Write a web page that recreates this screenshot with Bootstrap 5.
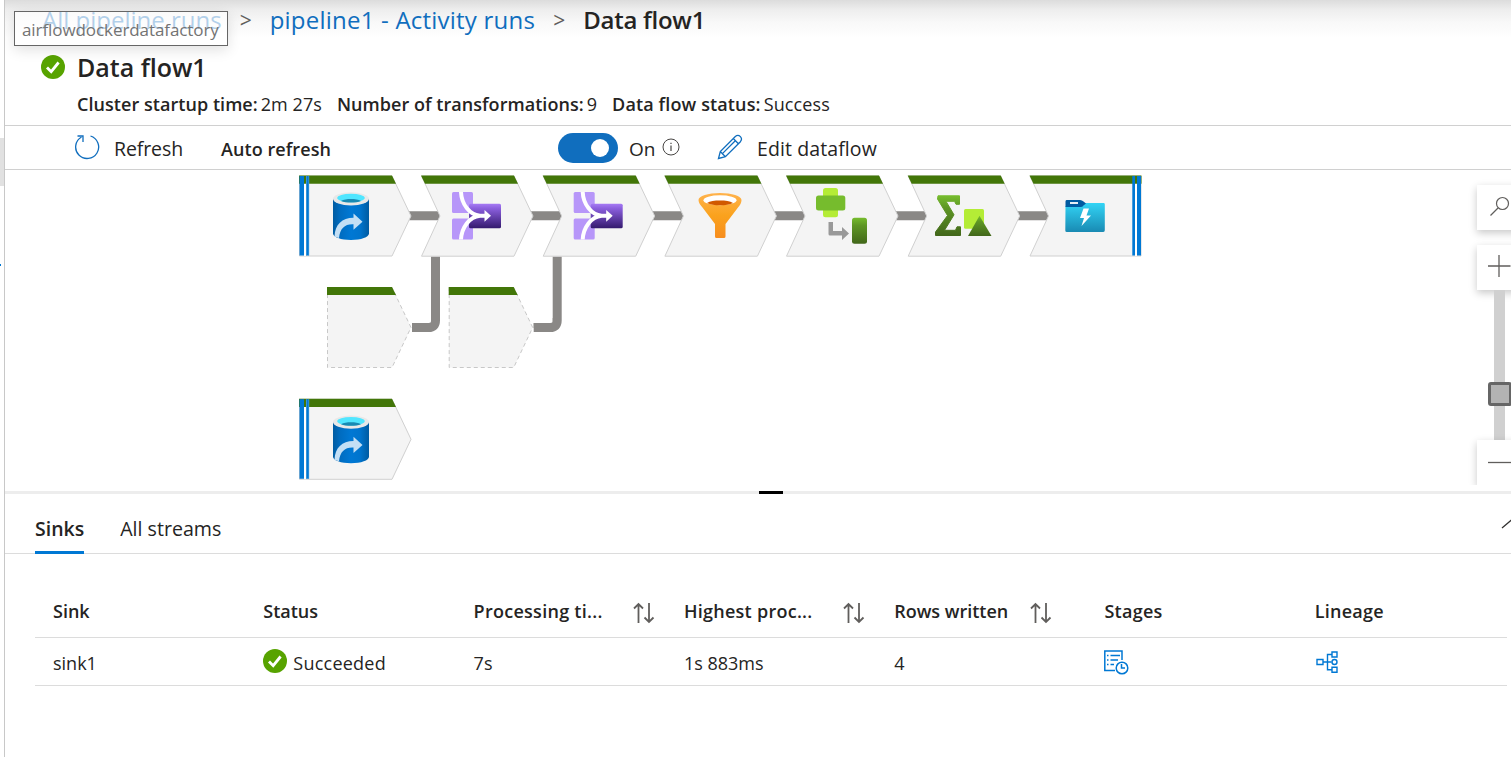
<!DOCTYPE html>
<html lang="en">
<head>
<meta charset="utf-8">
<title>Data flow1</title>
<meta name="viewport" content="width=device-width, initial-scale=1">
<link rel="stylesheet" href="https://cdn.jsdelivr.net/npm/bootstrap@5.3.0/dist/css/bootstrap.min.css">
<style>
  body { font-family: "Open Sans", "Noto Sans", sans-serif; color: #252423; background: #fff; font-size: 18px; line-height: 26px; height: 757px; }
  b, .semi { font-weight: 600; }
  svg { display: block; flex-shrink: 0; }
  .rail { width: 5px; border-right: 1px solid #c8c8c8; }
  .rail-thumb { position: absolute; top: 138px; left: 0; width: 4px; height: 48px; background: #e1e1e1; }
  .rail-dot { position: absolute; top: 264px; left: 0; width: 1px; height: 2px; background: #0078d4; }

  .head { height: 126px; border-bottom: 1px solid #d0d0d0; background: linear-gradient(#dcdcdc 0, #eee 10px, #f8f8f8 22px, #fff 38px); }
  .crumbs { height: 40px; padding-left: 37px; font-size: 24px; }
  .crumbs a { color: #106ebe; text-decoration: none; }
  .crumbs .activity { letter-spacing: .22px; }
  .crumbs .here { letter-spacing: -.25px; }
  .crumbs .sep { color: #605e5c; font-size: 21px; width: 48px; text-align: center; }
  .tip { position: absolute; left: 9px; top: 11px; width: 214px; height: 35px; padding-left: 7px; border: 1px solid #666; background: rgba(255,255,255,.68); color: #737373; box-shadow: 0 4px 14px rgba(0,0,0,.12); font-size: 17px; line-height: 36px; letter-spacing: -.08px; }
  .title { height: 54px; padding-left: 36px; gap: 12px; }
  .title h1 { font-size: 25px; font-weight: 600; line-height: 34px; }
  .facts { padding-left: 72px; height: 20px; gap: 15px; letter-spacing: .05px; }
  .facts b { margin-right: 3px; }
  .facts .status { letter-spacing: .13px; }

  .tools { height: 44px; border-bottom: 1px solid #d0d0d0; padding-left: 69px; }
  .cmd { font-size: 19.5px; padding-top: 3px; letter-spacing: .1px; }
  .cmd-refresh { margin-left: 14px; letter-spacing: -.1px; }
  .cmd-edit { margin-left: 14px; }
  .auto { width: 337px; margin-left: 38px; padding-top: 3px; letter-spacing: .07px; }
  .switch { width: 60px; height: 30px; border-radius: 15px; background: #106ebe; padding-right: 9px; }
  .knob { width: 18px; height: 18px; border-radius: 50%; background: #fff; }
  .state { margin-left: 11px; padding-top: 3px; font-size: 19px; width: 33px; }
  .pencil { margin-left: 37px; }
  .tools > svg { margin-top: -1px; }

  .canvas { height: 321px; }
  .zoomer { position: absolute; left: 1462px; top: 0; width: 44px; height: 315px; padding: 15px 0 0 10px; overflow: hidden; }
  .zbtn { width: 45px; height: 45px; background: #fff; box-shadow: 0 3px 8px rgba(0,0,0,.22); }
  .zbtn-in { margin-top: 15px; }
  .track { width: 11px; height: 150px; margin-left: 17px; background: #d0d0d0; }
  .thumb { position: absolute; left: 21px; top: 212px; width: 24px; height: 24px; border: 3px solid #666; border-radius: 3px; background: #b3b3b3; }

  .split { height: 3px; background: #ededed; }
  .grip { width: 24px; height: 3px; background: #000; margin-left: 754px; }
  .tabs { height: 60px; padding-left: 30px; border-bottom: 1px solid #dcdcdc; gap: 36px; font-size: 19.6px; }
  .tabs .tab { padding-top: 22px; height: 60px; }
  .tabs .on { border-bottom: 3px solid #0078d4; font-weight: 600; font-size: 19.5px; }
  .chev { position: absolute; left: 1495px; top: 517px; }
  .lines { margin: 31px 4px 0 30px; }
  .line { border-bottom: 1px solid #dcdcdc; padding-left: 18px; }
  .line > div { flex: 0 0 210.3px; }
  .line.top { height: 53px; padding-bottom: 1px; }
  .line.item { height: 48px; padding-top: 2px; }
  .cut { width: 159px; letter-spacing: .27px; }
  .wide { letter-spacing: .24px; }
  .sort { margin-top: 4px; }
  .sort-near { margin-left: 22px; }
  .ok { margin: -3px 6px 0 0; }
  .act { margin-top: -1px; }
</style>
</head>
<body class="d-flex overflow-hidden text-nowrap">
<aside class="rail flex-shrink-0 position-relative"><div class="rail-thumb"></div><div class="rail-dot"></div></aside>
<main class="flex-grow-1 position-relative overflow-hidden">
  <header class="head">
    <nav class="crumbs d-flex align-items-center">
      <a href="#">All pipeline runs</a><span class="sep">&gt;</span>
      <a href="#" class="activity">pipeline1 - Activity runs</a><span class="sep">&gt;</span>
      <span class="semi here">Data flow1</span>
    </nav>
    <div class="tip">airflowdockerdatafactory</div>
    <div class="title d-flex align-items-center">
      <svg width="24" height="24" viewBox="0 0 24 24"><circle cx="12" cy="12" r="12" fill="#57a300"/><path d="M6 12.400l4.200 4.300L17.600 7.500" fill="none" stroke="#fff" stroke-width="2.800"/></svg>
      <h1 class="m-0">Data flow1</h1>
    </div>
    <div class="facts d-flex align-items-center">
      <div><b>Cluster startup time:</b>2m 27s</div>
      <div><b>Number of transformations:</b>9</div>
      <div class="status"><b>Data flow status:</b>Success</div>
    </div>
  </header>

  <div class="tools d-flex align-items-center">
    <svg width="26" height="26" viewBox="0 0 26 26" fill="none" stroke="#106ebe" stroke-width="1.300"><path d="M16.500 2A11.500 11.500 0 1 1 7.500 3"/><path d="M3.500 2H9v6"/></svg>
    <span class="cmd cmd-refresh">Refresh</span>
    <b class="auto">Auto refresh</b>
    <div class="switch d-flex align-items-center justify-content-end"><div class="knob"></div></div>
    <span class="state">On</span>
    <svg width="18" height="18" viewBox="0 0 18 18" fill="none" stroke="#484644"><circle cx="9" cy="9" r="8"/><path d="M9 7.500v5.500M9 4.700v1.400" stroke-width="1.200"/></svg>
    <svg class="pencil" width="26" height="26" viewBox="0 0 26 26" fill="none" stroke="#106ebe" stroke-width="1.300"><path d="M1.500 24.500L3.300 17.500 18.300 2.500Q21 .3 23.400 2.600 25.600 5 23.400 7.700L8.400 22.700zM3.300 17.500l5.100 5.200M16.300 4.500l5.100 5.200M5.400 19.600L18.800 6.200"/></svg>
    <span class="cmd cmd-edit">Edit dataflow</span>
  </div>

  <section class="canvas position-relative">
    <svg width="1506" height="321" viewBox="5 170 1506 321">
      <defs>
        <linearGradient id="blue"><stop offset="0" stop-color="#005ba1"/><stop offset=".2" stop-color="#006cc0"/><stop offset=".5" stop-color="#0078d4"/><stop offset=".75" stop-color="#0074cd"/><stop offset="1" stop-color="#005ba1"/></linearGradient>
        <linearGradient id="violet" x2="0" y2="1"><stop offset="0" stop-color="#a67af4"/><stop offset=".2" stop-color="#8a5edc"/><stop offset="1" stop-color="#341a6e"/></linearGradient>
        <linearGradient id="orange" x2="0" y2="1"><stop offset="0" stop-color="#ffb34d"/><stop offset=".5" stop-color="#faa21d"/><stop offset="1" stop-color="#f78d1e"/></linearGradient>
        <linearGradient id="green" x2="0" y2="1"><stop offset="0" stop-color="#76bc2d"/><stop offset=".3" stop-color="#5e9624"/><stop offset="1" stop-color="#42671a"/></linearGradient>
        <linearGradient id="sky" x2="0" y2="1"><stop offset="0" stop-color="#32d4f5"/><stop offset="1" stop-color="#198ab3"/></linearGradient>
        <g id="source">
          <path d="M299.500 176H392l19 40-19 40H299.500z" fill="#f4f4f4" stroke="#d0d0d0"/>
          <path d="M299 175.500h93l4 8.300h-97z" fill="#427608"/>
          <path d="M304 184h2v72h-2z" fill="#fff"/>
          <path d="M299.500 176h4.500v79.500h-4.500zM306 176h3v79.500h-3z" fill="#0078d4"/>
          <path d="M306.500 176v79.500M308.800 176v79.500" stroke="#5ba6dc" stroke-width=".6"/>
          <path d="M333 199v34.500c0 3.600 8 6.500 18 6.500s18-2.900 18-6.500V199z" fill="url(#blue)"/>
          <ellipse cx="351" cy="198.800" rx="18" ry="6.600" fill="#e8e8e8"/>
          <ellipse cx="351" cy="198" rx="13.800" ry="4.200" fill="#50e6ff"/>
          <path d="M341 201c2.500-1.400 6-2 10-2s7.500.6 10 2c-2.500 1-6 1.500-10 1.500s-7.500-.5-10-1.500z" fill="#198ab3"/>
          <path d="M334.500 236.500c.5-12 7.500-18.800 19-18.800v-4.200l9 8.200-9 8v-5.500c-8.500-.5-13.500 4-14.500 13.800-2-.5-3.500-1-4.500-1.500z" fill="#c3dff5"/>
        </g>
        <g id="step">
          <path d="M421.500 176H514l19 40-19 40.200h-92.500L440 216z" fill="#f4f4f4" stroke="#d0d0d0"/>
          <path d="M421 175.500h93l4 8.300h-93z" fill="#427608"/>
        </g>
        <g id="union" fill="#b796f9">
          <rect x="452" y="192" width="21" height="21" rx="1.500"/><rect x="452" y="218.500" width="21" height="21" rx="1.500"/>
          <rect x="469" y="203.700" width="32" height="24.500" rx="1.500" fill="url(#violet)"/>
          <path d="M461 192c.5 12 8.500 23 19 23.800M461 239.500c.5-12 8.500-23 19-23.800h6" fill="none" stroke="#fff" stroke-width="4"/>
          <path d="M484.500 210l6.500 5.800-6.500 6z" fill="#fff"/>
        </g>
        <g id="ref">
          <path d="M327.500 287.500H392l19 40-19 40H327.500z" fill="#f4f4f4" stroke="#c8c8c8" stroke-dasharray="4 3"/>
          <path d="M327 287h65l4 8h-69z" fill="#427608"/>
          <path d="M412 327.500h16.500q7 0 7-7V256.500" fill="none" stroke="#8a8886" stroke-width="9"/>
          <path d="M412 323h19v-5h4v10h-23z" fill="#8a8886"/>
        </g>
      </defs>
      <path d="M408 215.700H1049" stroke="#8a8886" stroke-width="9"/>
      <use href="#source"/><use href="#source" y="223.300"/>
      <use href="#ref"/><use href="#ref" x="121.700"/>
      <use href="#step"/><use href="#step" x="121.700"/><use href="#step" x="243.400"/><use href="#step" x="365"/><use href="#step" x="486.700"/>
      <path d="M1030 176h111v80h-111l18.500-40z" fill="#f4f4f4" stroke="#d0d0d0"/>
      <path d="M1029.500 175.500H1141.500v8.300h-108z" fill="#427608"/>
      <path d="M1135 184h2v72h-2z" fill="#fff"/>
      <path d="M1132.300 176h2.700v79.500h-2.700zM1137 176h4v79.500h-4z" fill="#0078d4"/>
      <use href="#union"/><use href="#union" x="121.700"/>

      <path d="M698.500 200c0-4 9.600-7 21.500-7s21.500 3 21.500 7c0 3-1.500 5-3.500 7.500l-12.500 16.500v12.500q0 1.500-1.500 1.500h-7.500q-1.500 0-1.500-1.500V224l-12.500-16.500c-2-2.500-4-4.500-4-7.500z" fill="url(#orange)"/>
      <ellipse cx="720" cy="200.300" rx="16.500" ry="5" fill="#fff"/>
      <path d="M707 203c3-2 7.500-2.500 13-2.500s10 .5 13 2.500c-3 1.500-8 2.300-13 2.300s-10-.8-13-2.300z" fill="#d15900"/>

      <rect x="823" y="188" width="15" height="29.300" rx="2.500" fill="#b4ec36"/><rect x="816" y="195.500" width="29.300" height="15" rx="2.500" fill="#76bc2d"/>
      <path d="M828.500 222h4.500v9h9v-4l7 6.500-7 6.500v-4.500h-12q-1.500 0-1.500-1.500z" fill="#999"/>
      <rect x="852" y="217.700" width="15" height="26" rx="2.500" fill="url(#green)"/>

      <path d="M938 195.800h21.500v8.500h-3.500l-1.500-3h-8.500l8 13.500-9.500 15.500h11l1.500-3.500h3.500v8.700h-25v-3.500l12-16.500-10-16.500z" fill="url(#green)" stroke="url(#green)" stroke-linejoin="round"/>
      <rect x="964" y="209" width="20" height="19.700" rx="1.500" fill="#b4ec36"/><path d="M979.500 215.700l12 20.300h-23.500z" fill="url(#green)"/>

      <path d="M1065.500 206h17l3-3h18q1.300 0 1.300 1.300v26q0 1.700-1.500 1.700h-36.500q-1.500 0-1.500-1.500z" fill="url(#sky)"/>
      <path d="M1066.500 200h13.500q2 0 3.500 1.500l2.500 2-2.500 2q-1 1.500-3 1.500h-15v-5.500q0-1.500 1-1.500z" fill="#005ba1"/>
      <path d="M1070 203h8" stroke="#fff" stroke-width="1.800"/>
      <path d="M1083.500 208.500h5.500l-2.500 7h4.500l-9.500 10.500 2.500-8h-4z" fill="#fff"/>
    </svg>
    <div class="zoomer">
      <div class="zbtn"><svg width="34" height="45" fill="none" stroke="#605e5c" stroke-width="1.200"><circle cx="25.500" cy="18.500" r="6"/><path d="M21 23l-7.500 7.500"/></svg></div>
      <div class="zbtn zbtn-in"><svg width="34" height="45" stroke="#605e5c" stroke-width="1.300"><path d="M11 21h22.500M22 10v22"/></svg></div>
      <div class="track"></div>
      <div class="zbtn"><svg width="34" height="45" stroke="#605e5c" stroke-width="1.300"><path d="M11 22.500h23"/></svg></div>
      <div class="thumb"></div>
    </div>
  </section>

  <div class="split"><div class="grip"></div></div>
  <div class="tabs d-flex"><div class="tab on">Sinks</div><div class="tab">All streams</div></div>
  <svg class="chev" width="14" height="12" fill="none" stroke="#323130" stroke-width="1.300"><path d="M2 11l9.500-8 8 8"/></svg>

  <section class="lines">
    <div class="line top d-flex align-items-center semi">
      <div>Sink</div>
      <div>Status</div>
      <div class="d-flex"><span class="cut">Processing ti...</span><svg class="sort" width="22" height="22" viewBox="0 0 22 22" fill="none" stroke="#605e5c" stroke-width="1.800"><path d="M5.500 21V2M1 6.500L5.500 2 10 6.500M16 1v19M11.500 15.500L16 20l4.500-4.500"/></svg></div>
      <div class="d-flex"><span class="cut">Highest proc...</span><svg class="sort" width="22" height="22" viewBox="0 0 22 22" fill="none" stroke="#605e5c" stroke-width="1.800"><path d="M5.500 21V2M1 6.500L5.500 2 10 6.500M16 1v19M11.500 15.500L16 20l4.500-4.500"/></svg></div>
      <div class="d-flex">Rows written<svg class="sort sort-near" width="22" height="22" viewBox="0 0 22 22" fill="none" stroke="#605e5c" stroke-width="1.800"><path d="M5.500 21V2M1 6.500L5.500 2 10 6.500M16 1v19M11.500 15.500L16 20l4.500-4.500"/></svg></div>
      <div class="wide">Stages</div>
      <div class="wide">Lineage</div>
    </div>
    <div class="line item d-flex align-items-center">
      <div>sink1</div>
      <div class="d-flex align-items-center wide"><svg class="ok" width="24" height="24" viewBox="0 0 24 24"><circle cx="12" cy="12" r="12" fill="#57a300"/><path d="M6 12.400l4.200 4.300L17.600 7.500" fill="none" stroke="#fff" stroke-width="2.800"/></svg>Succeeded</div>
      <div>7s</div>
      <div>1s 883ms</div>
      <div>4</div>
      <div><svg class="act" width="25" height="25" viewBox="0 0 25 25" fill="none" stroke="#0078d4" stroke-width="1.500"><path d="M18 10V1H.8v19.500H11"/><path d="M3 5.500h1.500M6.500 5.500H16M3 10h1.500M6.500 10H14M3 14.500h1.500M6.500 14.500H10"/><circle cx="18" cy="18" r="5.800"/><path d="M17.500 14v4h3.500"/></svg></div>
      <div><svg class="act" width="24" height="24" viewBox="0 0 24 24" fill="none" stroke="#0078d4" stroke-width="1.400"><path d="M2 9.500h6v5H2zM8 12h8.500M17 4.500h-4.500v15.200H17M17 2h5v5h-5zM17 17.200h5v5h-5z"/><circle cx="19.500" cy="12" r="2.500"/></svg></div>
    </div>
  </section>
</main>
<script src="https://cdn.jsdelivr.net/npm/bootstrap@5.3.0/dist/js/bootstrap.bundle.min.js"></script>
</body>
</html>
